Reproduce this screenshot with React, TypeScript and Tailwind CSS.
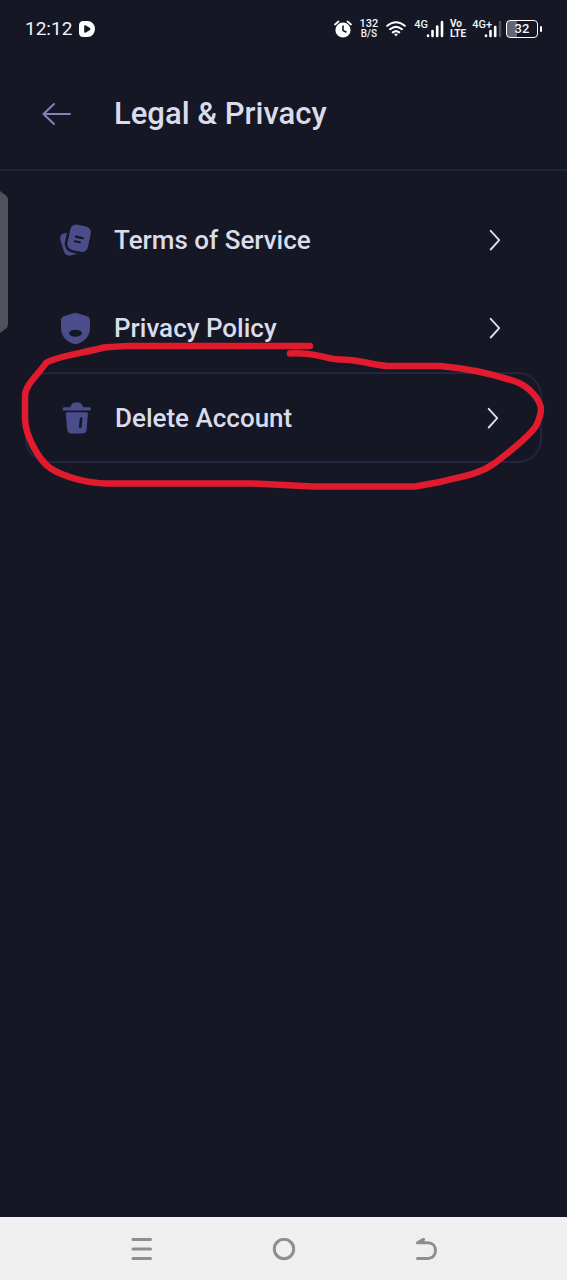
import type { ReactNode } from "react";

function StatusBar() {
  return (
    <div className="flex h-[58px] items-center justify-between pr-[25px] pl-[25px] text-[#f3f4f8]">
      <div className="flex items-center gap-[7px]">
        <time className="text-[19px] leading-6">12:12</time>
        <svg className="h-4 w-4" viewBox="0 0 16 16" aria-hidden="true">
          <path d="M4.500 0H8.500A7.500 8 0 0 1 8.500 16H4.500Q0 16 0 11.500V4.500Q0 0 4.500 0Z" fill="#fff" />
          <path d="M5.200 5.200Q5.200 3.800 6.500 4.300L11 7.100Q12 8 11 8.900L6.500 11.700Q5.200 12.200 5.200 10.800Z" fill="#151724" />
        </svg>
      </div>
      <div className="flex items-center gap-2">
        <svg className="h-[18px] w-[18px]" viewBox="0 0 18 18" fill="none" aria-hidden="true">
          <circle cx="9" cy="10" r="7.600" fill="#fff" />
          <path d="M1 4.500L4.500 1.500M17 4.500L13.500 1.500" stroke="#fff" strokeWidth="1.700" strokeLinecap="round" />
          <path d="M9 6V10.500L12 12" stroke="#151724" strokeWidth="1.600" strokeLinecap="round" />
        </svg>
        <div className="flex flex-col text-center font-medium">
          <span className="text-[11px] leading-[10px]">132</span>
          <span className="text-[10px] leading-[10px]">B/S</span>
        </div>
        <svg className="h-4 w-5" viewBox="0 0 20 16" fill="none" stroke="#fff" strokeWidth="2.100" strokeLinecap="round" aria-hidden="true">
          <path d="M1.200 4.800Q10 -2.300 18.800 4.800M4 8.200Q10 3.400 16 8.200M6.800 11.300Q10 8.800 13.200 11.300" />
          <path d="M7.900 12.800L10 15.500L12.100 12.800Z" fill="#fff" stroke="none" />
        </svg>
        <div className="flex">
          <span className="self-start text-[11px] leading-[10px] font-medium">4G</span>
          <svg className="-ml-0.5 h-[18px] w-[18px]" viewBox="0 0 18 18" stroke="#fff" strokeWidth="2.600" strokeLinecap="round" aria-hidden="true">
            <path d="M2 15.500V16M6.500 11V16M11.200 6.500V16M16 2V16" />
          </svg>
        </div>
        <div className="-ml-0.5 flex flex-col text-[10px] leading-[10px] font-bold">
          <span>Vo</span>
          <span>LTE</span>
        </div>
        <div className="-ml-0.5 flex">
          <span className="self-start text-[11px] leading-[10px] font-medium">4G+</span>
          <svg className="-ml-2 h-[18px] w-[18px]" viewBox="0 0 18 18" stroke="#fff" strokeWidth="2.600" strokeLinecap="round" aria-hidden="true">
            <path d="M2 15.500V16M6.500 11V16M11.200 7V16" />
            <path d="M16 2V16" stroke="#4c4e59" />
          </svg>
        </div>
        <div className="-ml-1 flex items-center gap-0.5">
          <div className="flex h-[18px] w-8 items-center justify-center rounded-[4px] border border-white bg-linear-to-r from-[#646670] from-35% to-[#151724] to-35% text-[13px] leading-4 font-medium">
            32
          </div>
          <div className="h-1.5 w-0.5 rounded-sm bg-white" />
        </div>
      </div>
    </div>
  );
}

function TermsIcon() {
  return (
    <svg className="h-[34px] w-[34px]" viewBox="0 0 34 34" aria-hidden="true">
      <path d="M7 10Q1 11.500 2.400 17L5.700 28Q7.500 33.500 13 32.400L22 29.500Q25 28.500 26.500 26L14 9Z" fill="#4b4d8a" />
      <rect x="9.300" y="1" width="23.500" height="28.500" rx="7.500" transform="rotate(12 21 15.500)" fill="#4b4d8a" stroke="#151724" strokeWidth="2.600" />
      <path d="M17.800 13.600L25 15.200M16.800 18.200L21.800 19.300" stroke="#151724" strokeWidth="2.100" strokeLinecap="round" />
    </svg>
  );
}

function PrivacyIcon() {
  return (
    <svg className="h-[34px] w-[34px]" viewBox="0 0 34 34" aria-hidden="true">
      <path d="M15.500 2.300Q17.500 1.500 19.500 2.300L28.500 5Q32 6 32 9.500V17C32 25 26.500 30.500 20.500 32.500Q17.500 33.800 14.500 32.500C8.500 30.500 3 25 3 17V9.500Q3 6 6.500 5Z" fill="#4b4d8a" />
      <ellipse cx="17.500" cy="22.300" rx="6.500" ry="3.500" fill="#151724" />
    </svg>
  );
}

function TrashIcon() {
  return (
    <svg className="h-[34px] w-[34px]" viewBox="0 0 34 34" fill="#4b4d8a" aria-hidden="true">
      <path d="M11 6.300L13 3Q14 1.500 15.500 1.500H20Q21.500 1.500 22.500 3L24.500 6.300H30.500Q32 6.300 32 7.900T30.500 9.500H5Q3.500 9.500 3.500 7.900T5 6.300Z" />
      <path d="M8.500 11.200H27.300Q29 11.200 28.900 13L27.600 28.500Q27.300 32.500 23.500 32.500H12.200Q8.500 32.500 8.200 28.500L6.800 13Q6.700 11.200 8.500 11.200Z" />
      <path d="M22.200 17.500L21.200 26" stroke="#151724" strokeWidth="2.600" strokeLinecap="round" />
    </svg>
  );
}

function Row({ icon, label, outlined = false }: { icon: ReactNode; label: string; outlined?: boolean }) {
  return (
    <li>
      <a
        href="#"
        className={
          outlined
            ? "flex h-[91px] items-center rounded-3xl border-2 border-[#22253e] pr-[39px] pl-8"
            : "flex h-[88px] items-center border-x border-transparent pr-[38px] pl-8"
        }
      >
        {icon}
        <span className="ml-[22px] flex-1 text-[26px] leading-8 font-medium">{label}</span>
        <svg className="h-6 w-4" viewBox="0 0 16 24" fill="none" stroke="#dadceb" strokeWidth="1.900" strokeLinecap="round" strokeLinejoin="round" aria-hidden="true">
          <path d="M3.700 2.800L12.200 12.100L3.700 21.500" />
        </svg>
      </a>
    </li>
  );
}

function Marker() {
  return (
    <svg
      className="pointer-events-none absolute top-[170px] left-0 h-[330px] w-full"
      viewBox="0 170 567 330"
      preserveAspectRatio="none"
      fill="none"
      stroke="#e11b2e"
      strokeWidth="6.500"
      strokeLinecap="round"
      strokeLinejoin="round"
      aria-hidden="true"
    >
      <path d="M310 346H127Q115 346.500 104 347.500C84 353 57 356 46 363C37 376 25 385 25 396V420C26 436 38 459 50 468C65 478 90 483 106 483.500H253L313 486.500H415L440 482C463 476 478 475 495 463C512 450 530 435 536 426C540 418 541 412 541 408C539 398 529 387 517 382C493 374 464 368 440 366H387C366 364 358 359 338 359.500C322 358 314 352 290 353.500" />
    </svg>
  );
}

function NavBar() {
  return (
    <nav className="flex h-[63px] items-center justify-center gap-[114px] border-t-6 border-[#efeff5] bg-[#efefef] text-[#8e8e8e]">
      <button type="button" aria-label="Recent apps">
        <svg className="h-7 w-7" viewBox="0 0 28 28" stroke="currentColor" strokeWidth="3" strokeLinecap="round" aria-hidden="true">
          <path d="M5 1.500H22.500M5 11H22.500M5 20.500H22.500" />
        </svg>
      </button>
      <button type="button" aria-label="Home">
        <svg className="h-7 w-7" viewBox="0 0 28 28" fill="none" stroke="currentColor" strokeWidth="3" aria-hidden="true">
          <circle cx="14" cy="11" r="9.700" />
        </svg>
      </button>
      <button type="button" aria-label="Back">
        <svg className="h-7 w-7" viewBox="0 0 28 28" fill="none" stroke="currentColor" strokeWidth="3" strokeLinecap="round" strokeLinejoin="round" aria-hidden="true">
          <path d="M5.500 20.500H16C20.500 20.500 23.500 17 23.500 12.500S20.500 4.700 16 4.700H5.500L11.500 1.300" />
          <path d="M5.500 4.700L11.500 1.300L12.500 4.700Z" fill="currentColor" strokeWidth="1" />
        </svg>
      </button>
    </nav>
  );
}

export default function App() {
  return (
    <div className="relative flex min-h-screen flex-col bg-[#151724] font-[Roboto,sans-serif] text-[#dadceb]">
      <StatusBar />
      <header className="flex h-[113px] items-center border-b-2 border-[#20233c] pl-[42px]">
        <button type="button" aria-label="Back">
          <svg className="h-7 w-[30px]" viewBox="0 0 30 28" fill="none" stroke="#8384b5" strokeWidth="2" strokeLinecap="round" strokeLinejoin="round" aria-hidden="true">
            <path d="M28 14H1.500M12 4L1.500 14L12 24" />
          </svg>
        </button>
        <h1 className="ml-[42px] text-[31px] leading-10 font-medium">Legal &amp; Privacy</h1>
      </header>
      <main className="flex-1 px-[25px] pt-[25px]">
        <ul>
          <Row icon={<TermsIcon />} label="Terms of Service" />
          <Row icon={<PrivacyIcon />} label="Privacy Policy" />
          <Row icon={<TrashIcon />} label="Delete Account" outlined />
        </ul>
      </main>
      <svg className="absolute top-[190px] left-0 h-36 w-2" viewBox="0 0 8 144" fill="#50525b" aria-hidden="true">
        <path d="M0 1L6 5.500Q8 7 8 9V134Q8 137 6 138.500L0 143Z" />
      </svg>
      <Marker />
      <NavBar />
    </div>
  );
}
